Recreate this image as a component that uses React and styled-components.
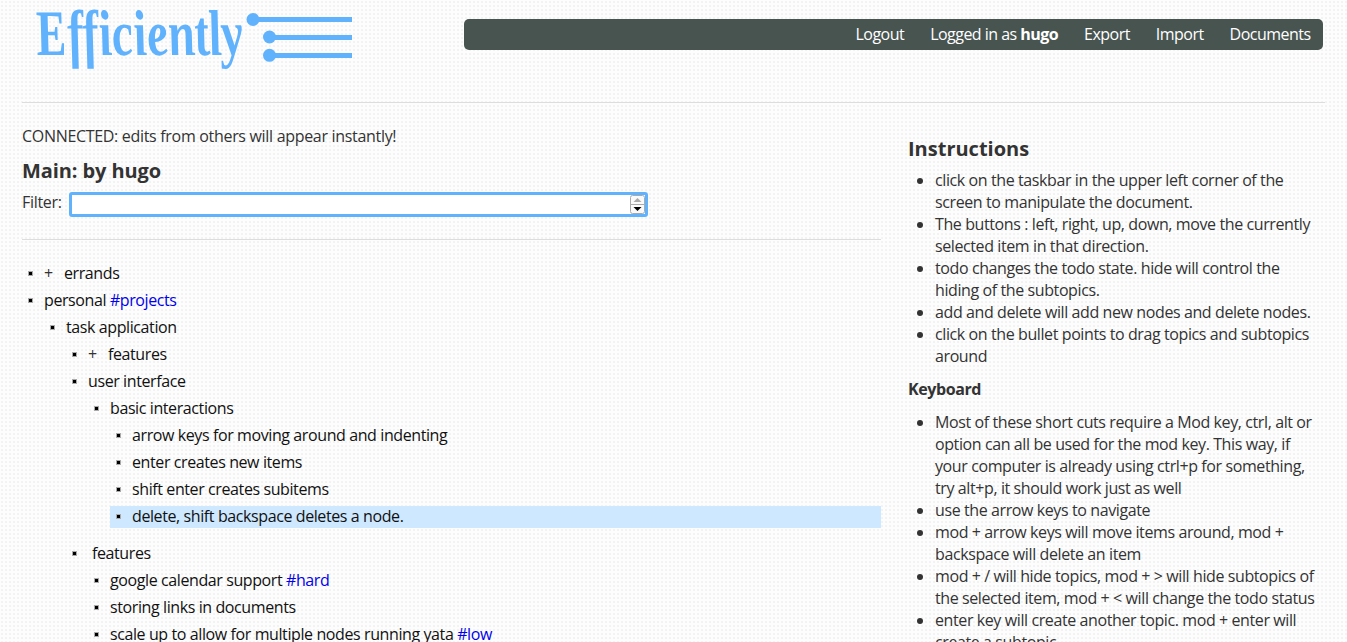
import React from "react";
import styled, { createGlobalStyle } from "styled-components";

const GlobalStyle = createGlobalStyle`
  html, body { margin: 0; height: 642px; overflow: hidden; }
  body {
    background-color: #fdfdfd;
    background-image: radial-gradient(circle at 50% 50%, #f0f0f0 0, #f4f4f4 1px, transparent 1.4px);
    background-size: 4px 4px;
    font: 16px/22px "Open Sans", "Noto Sans", sans-serif;
    letter-spacing: -0.4px;
    color: #333;
  }
  * { box-sizing: border-box; }
`;

const Page = styled.div`
  height: 642px;
  padding: 0 22px;
  overflow: hidden;
`;
const Header = styled.header`
  height: 103px;
  width: 1303px;
  display: flex;
  justify-content: space-between;
  align-items: flex-start;
  border-bottom: 1px solid #ddd;
`;
const Logo = styled.svg`
  display: block;
  width: 342px;
  height: 80px;
  overflow: visible;
  letter-spacing: 0;
`;
const Nav = styled.nav`
  margin: 19px 2px 0 0;
  width: 859px;
  height: 31px;
  padding: 0 12.5px 1px 0;
  display: flex;
  justify-content: flex-end;
  align-items: center;
  gap: 26px;
  background: #485450;
  border-radius: 5px;
  letter-spacing: -0.53px;
`;
const NavLink = styled.a`
  color: #fff;
  white-space: nowrap;
`;
const Body = styled.div`
  display: flex;
`;
const Main = styled.main`
  width: 859px;
  padding-top: 22px;
`;
const Status = styled.p`
  margin: 0;
  letter-spacing: -0.31px;
`;
const Title = styled.h2`
  margin: 10px 0 1px;
  font-size: 20px;
  letter-spacing: -0.1px;
  line-height: 27px;
  font-weight: 700;
`;
const FilterRow = styled.label`
  display: flex;
  height: 55px;
  padding-top: 7px;
  line-height: 20px;
  border-bottom: 1px solid #ddd;
`;
const FilterName = styled.span`
  width: 47px;
  letter-spacing: -0.3px;
`;
const FilterBox = styled.span`
  display: flex;
  justify-content: flex-end;
  align-items: center;
  width: 579px;
  height: 25px;
  background: #fff;
  border: 3px solid #61b2fd;
  border-radius: 3px;
`;
const Tree = styled.ul`
  margin: 23px 0 0;
  padding: 0;
  list-style: none;
  color: #111;
`;
const Item = styled.li`
  display: flex;
  align-items: center;
  height: 22px;
  padding-bottom: 2px;
  margin: ${(p) => (p.$gap ? "15px" : "5px")} 0 0 ${(p) => p.$level * 22}px;
  background: ${(p) => (p.$selected ? "#cde8ff" : "transparent")};
  white-space: pre;
`;
const Handle = styled.span`
  flex: none;
  width: 5px;
  height: 5px;
  margin: 0 ${(p) => (p.$wide ? 15 : 11)}px 0 6px;
  background: #000;
  border: 1px solid #aaa;
`;
const Expand = styled.span`
  width: 20px;
  color: #333;
`;
const Tag = styled.a`
  color: #0000ee;
`;
const Aside = styled.aside`
  width: 440px;
  padding: 32px 0 0 27px;
`;
const AsideTitle = styled.h2`
  margin: 0;
  font-size: 20px;
  letter-spacing: 0;
  line-height: 28px;
`;
const AsideSubtitle = styled.h3`
  margin: 11px 0;
  font-size: 16px;
  line-height: 22px;
`;
const HelpList = styled.ul`
  margin: ${(p) => p.$top}px 0 0;
  padding: 0;
  list-style: none;
`;
const HelpItem = styled.li`
  display: flex;
  align-items: flex-start;
  white-space: pre;
  &::before {
    content: "";
    flex: none;
    width: 6px;
    height: 6px;
    margin: 9px 12px 0 9px;
    border-radius: 50%;
    background: #333;
  }
`;

const NODES = [
  { level: 0, text: "errands", closed: true },
  { level: 0, text: "personal ", tag: "#projects" },
  { level: 1, text: "task application" },
  { level: 2, text: "features", closed: true },
  { level: 2, text: "user interface" },
  { level: 3, text: "basic interactions" },
  { level: 4, text: "arrow keys for moving around and indenting" },
  { level: 4, text: "enter creates new items" },
  { level: 4, text: "shift enter creates subitems" },
  { level: 4, text: "delete, shift backspace deletes a node.", selected: true },
  { level: 2, text: "features", gap: true, wide: true },
  { level: 3, text: "google calendar support ", tag: "#hard" },
  { level: 3, text: "storing links in documents" },
  { level: 3, text: "scale up to allow for multiple nodes running yata ", tag: "#low" },
];

const MOUSE_HELP = [
  "click on the taskbar in the upper left corner of the\nscreen to manipulate the document.",
  "The buttons : left, right, up, down, move the currently\nselected item in that direction.",
  "todo changes the todo state. hide will control the\nhiding of the subtopics.",
  "add and delete will add new nodes and delete nodes.",
  "click on the bullet points to drag topics and subtopics\naround",
];

const KEY_HELP = [
  "Most of these short cuts require a Mod key, ctrl, alt or\noption can all be used for the mod key. This way, if\nyour computer is already using ctrl+p for something,\ntry alt+p, it should work just as well",
  "use the arrow keys to navigate",
  "mod + arrow keys will move items around, mod +\nbackspace will delete an item",
  "mod + / will hide topics, mod + > will hide subtopics of\nthe selected item, mod + < will change the todo status",
  "enter key will create another topic. mod + enter will\ncreate a subtopic.",
];

function Brand() {
  return (
    <Logo viewBox="22 0 342 80" fill="#61b2fd">
      <text
        x="0"
        y="0"
        transform="translate(38 55) skewX(9) scale(1 1.2)"
        fontFamily="'Liberation Serif', serif"
        fontStyle="italic"
        fontWeight="700"
        fontSize="54"
        textLength="208"
        lengthAdjust="spacingAndGlyphs"
      >
        Efficiently
      </text>
      <circle cx="253" cy="19.5" r="6.5" />
      <rect x="253" y="17" width="99" height="5" />
      <circle cx="269.5" cy="37" r="6.5" />
      <rect x="269" y="35" width="83" height="5" />
      <circle cx="269.5" cy="55.3" r="6.5" />
      <rect x="269" y="53" width="83" height="5" />
    </Logo>
  );
}

function Stepper() {
  return (
    <svg width="15" height="19" viewBox="0 0 15 19">
      <rect x="0.5" y="0.5" width="14" height="18" rx="2" fill="#fafafa" stroke="#aaa" />
      <path d="M0.5 9.5h14" stroke="#aaa" />
      <path d="M3.500 7h8L7.500 3z" fill="#aaa" />
      <path d="M3.500 12h8L7.500 16z" fill="#000" />
    </svg>
  );
}

export default function App() {
  return (
    <>
      <GlobalStyle />
      <Page>
        <Header>
          <Brand />
          <Nav>
            <NavLink>Logout</NavLink>
            <NavLink>Logged in as <b>hugo</b></NavLink>
            <NavLink>Export</NavLink>
            <NavLink>Import</NavLink>
            <NavLink>Documents</NavLink>
          </Nav>
        </Header>
        <Body>
          <Main>
            <Status>CONNECTED: edits from others will appear instantly!</Status>
            <Title>Main: by hugo</Title>
            <FilterRow>
              <FilterName>Filter:</FilterName>
              <FilterBox><Stepper /></FilterBox>
            </FilterRow>
            <Tree>
              {NODES.map((n, i) => (
                <Item key={i} $level={n.level} $gap={n.gap} $selected={n.selected}>
                  <Handle $wide={n.wide} />
                  {n.closed && <Expand>+</Expand>}
                  {n.text}
                  {n.tag && <Tag>{n.tag}</Tag>}
                </Item>
              ))}
            </Tree>
          </Main>
          <Aside>
            <AsideTitle>Instructions</AsideTitle>
            <HelpList $top={6}>
              {MOUSE_HELP.map((t) => <HelpItem key={t}>{t}</HelpItem>)}
            </HelpList>
            <AsideSubtitle>Keyboard</AsideSubtitle>
            <HelpList $top={11}>
              {KEY_HELP.map((t) => <HelpItem key={t}>{t}</HelpItem>)}
            </HelpList>
          </Aside>
        </Body>
      </Page>
    </>
  );
}
